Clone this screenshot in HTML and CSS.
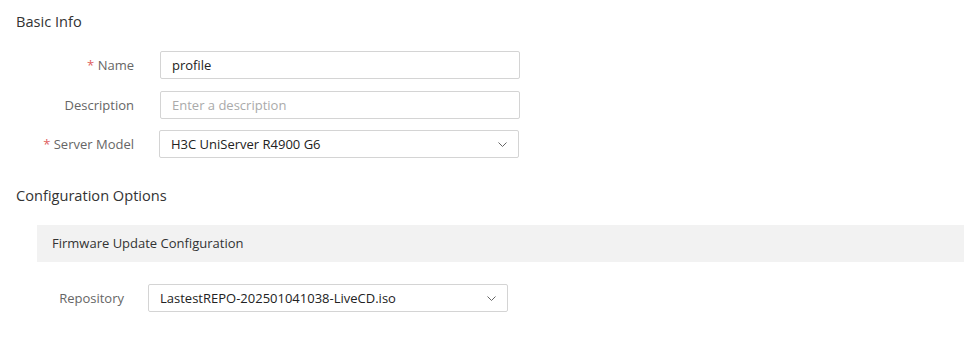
FILE: index.html
```html
<!DOCTYPE html>
<html lang="en">
<head>
    <meta charset="UTF-8">
    <title>Profile</title>
    <link rel="stylesheet" href="styles.css">
</head>
<body>
    <h2 class="section-title">Basic Info</h2>
    <div class="form">
        <div class="form-row">
            <label class="form-label"><span class="req">*</span> Name</label>
            <div class="field">profile</div>
        </div>
        <div class="form-row tight">
            <label class="form-label">Description</label>
            <div class="field placeholder">Enter a description</div>
        </div>
        <div class="form-row">
            <label class="form-label"><span class="req">*</span> Server Model</label>
            <div class="field select shift">
                <span>H3C UniServer R4900 G6</span>
                <svg class="chevron" width="9" height="5" viewBox="0 0 9 5"><path d="M0.5 0.5 L4.5 4.5 L8.5 0.5" fill="none" stroke="#666" stroke-width="1"/></svg>
            </div>
        </div>
    </div>

    <h2 class="section-title second">Configuration Options</h2>
    <div class="panel-head">Firmware Update Configuration</div>
    <div class="form-row repo-row">
        <label class="form-label repo-label">Repository</label>
        <div class="field select">
            <span>LastestREPO-202501041038-LiveCD.iso</span>
            <svg class="chevron" width="9" height="5" viewBox="0 0 9 5"><path d="M0.5 0.5 L4.5 4.5 L8.5 0.5" fill="none" stroke="#666" stroke-width="1"/></svg>
        </div>
    </div>
</body>
</html>
```

FILE: styles.css
```css
body {
    margin: 0;
    background: #fff;
    color: #333;
    font-family: "Open Sans", "Noto Sans", sans-serif;
    font-size: 13px;
}
.section-title {
    margin: 10px 0 0 16px;
    font-size: 14.6px;
    font-weight: normal;
    line-height: 22px;
    color: #333;
}
.section-title.second {
    margin-top: 26px;
}
.form {
    margin-top: 19px;
}
.form-row {
    display: flex;
    align-items: center;
    height: 28px;
    margin-bottom: 12px;
}
.form-row.tight {
    margin-bottom: 11px;
}
.form-row:last-child {
    margin-bottom: 0;
}
.form-label {
    width: 134px;
    text-align: right;
    color: #666;
    margin-right: 26px;
}
.req {
    color: #e06060;
}
.field {
    box-sizing: border-box;
    width: 360px;
    height: 28px;
    border: 1px solid #d4d4d4;
    border-radius: 2px;
    padding: 0 11px;
    display: flex;
    align-items: center;
    color: #222;
}
.field.placeholder {
    color: #aaa;
}
.field.shift {
    margin-left: -1px;
}
.select {
    justify-content: space-between;
    padding-right: 11px;
}
.chevron {
    flex: none;
}
.panel-head {
    margin: 19px 0 0 37px;
    height: 37px;
    line-height: 37px;
    padding-left: 15px;
    background: #f2f2f2;
    color: #333;
}
.repo-row {
    margin-top: 22px;
}
.repo-label {
    width: 124px;
    margin-right: 24px;
}
```
